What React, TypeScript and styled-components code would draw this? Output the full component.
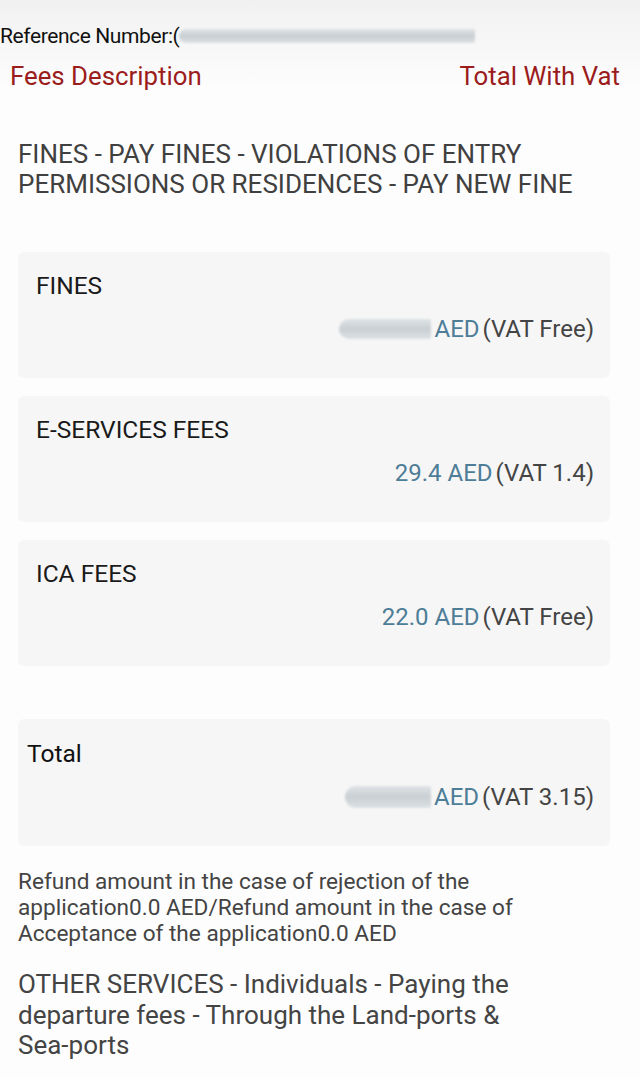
import styled, { createGlobalStyle } from "styled-components"

const GlobalStyle = createGlobalStyle`
  html, body {
    margin: 0;
    padding: 0;
    background: #fdfdfd;
    font-family: Roboto, "Liberation Sans", sans-serif;
  }
`

type Fee = {
  label: string
  amount: string | null
  vat: string
}

const fees: Fee[] = [
  { label: "FINES", amount: null, vat: "(VAT Free)" },
  { label: "E-SERVICES FEES", amount: "29.4", vat: "(VAT 1.4)" },
  { label: "ICA FEES", amount: "22.0", vat: "(VAT Free)" },
]

const App = () => {
  return (
    <Page>
      <GlobalStyle />
      <RefRow>
        Reference Number:(
        <Redacted $width={296} $height={14} />
      </RefRow>
      <HeaderRow>
        <span>Fees Description</span>
        <span>Total With Vat</span>
      </HeaderRow>
      <ServiceTitle>
        FINES - PAY FINES - VIOLATIONS OF ENTRY PERMISSIONS OR RESIDENCES - PAY NEW FINE
      </ServiceTitle>
      <Cards>
        {fees.map((fee) => (
          <FeeCard key={fee.label}>
            <FeeLabel>{fee.label}</FeeLabel>
            <Amount>
              {fee.amount ? (
                <Money>{fee.amount} AED</Money>
              ) : (
                <>
                  <Redacted $width={92} $height={20} />
                  <Money>AED</Money>
                </>
              )}
              <Vat>{fee.vat}</Vat>
            </Amount>
          </FeeCard>
        ))}
      </Cards>
      <TotalCard>
        <FeeLabel $total>Total</FeeLabel>
        <Amount>
          <Redacted $width={86} $height={22} />
          <Money>AED</Money>
          <Vat>(VAT 3.15)</Vat>
        </Amount>
      </TotalCard>
      <Refund>
        Refund amount in the case of rejection of the application0.0 AED/Refund amount in the
        case of Acceptance of the application0.0 AED
      </Refund>
      <OtherService>
        OTHER SERVICES - Individuals - Paying the departure fees - Through the Land-ports &amp;
        Sea&#8209;ports
      </OtherService>
    </Page>
  )
}

export default App

const Page = styled.div`
  width: 640px;
  min-height: 1079px;
  box-sizing: border-box;
  padding-top: 24px;
  background: linear-gradient(#f1f1f1 0px, #fdfdfd 90px);
  color: #444;
`

const RefRow = styled.div`
  display: flex;
  align-items: center;
  height: 24px;
  font-size: 21px;
  color: #111;
  letter-spacing: -0.4px;
`

const Redacted = styled.span<{ $width: number; $height: number }>`
  display: inline-block;
  flex-shrink: 0;
  width: ${(p) => p.$width}px;
  height: ${(p) => p.$height}px;
  border-radius: ${(p) => p.$height / 2}px 2px 2px ${(p) => p.$height / 2}px;
  background: linear-gradient(#dfe3e6, #c9cfd3 50%, #dde1e4);
  filter: blur(1px);
`

const HeaderRow = styled.div`
  display: flex;
  justify-content: space-between;
  padding: 13px 20px 0 10px;
  font-size: 25.8px;
  color: #9b1c1c;
`

const ServiceTitle = styled.div`
  margin: 48px 40px 0 18px;
  font-size: 26px;
  line-height: 30px;
  color: #404040;
`

const Cards = styled.div`
  display: flex;
  flex-direction: column;
  gap: 18px;
  margin: 53px 30px 0 18px;
`

const FeeCard = styled.div`
  display: flex;
  flex-direction: column;
  height: 126px;
  box-sizing: border-box;
  padding: 20px 16px 0 18px;
  background: #f6f6f6;
  border-radius: 6px;
`

const TotalCard = styled(FeeCard)`
  margin: 53px 30px 0 18px;
  padding-left: 9px;
  padding-top: 21px;
  height: 127px;
`

const FeeLabel = styled.div<{ $total?: boolean }>`
  font-size: 24.5px;
  line-height: 28px;
  color: ${(p) => (p.$total ? "#111" : "#1a1a1a")};
`

const Amount = styled.div`
  display: flex;
  justify-content: flex-end;
  align-items: center;
  gap: 3px;
  margin-top: 15px;
  font-size: 24px;
  line-height: 28px;
`

const Money = styled.span`
  color: #4d7d97;
`

const Vat = styled.span`
  color: #444;
`

const Refund = styled.div`
  margin: 23px 80px 0 18px;
  font-size: 22.6px;
  line-height: 26px;
  color: #444;
`

const OtherService = styled.div`
  margin: 22px 80px 0 18px;
  font-size: 26px;
  line-height: 30.5px;
  color: #444;
`
